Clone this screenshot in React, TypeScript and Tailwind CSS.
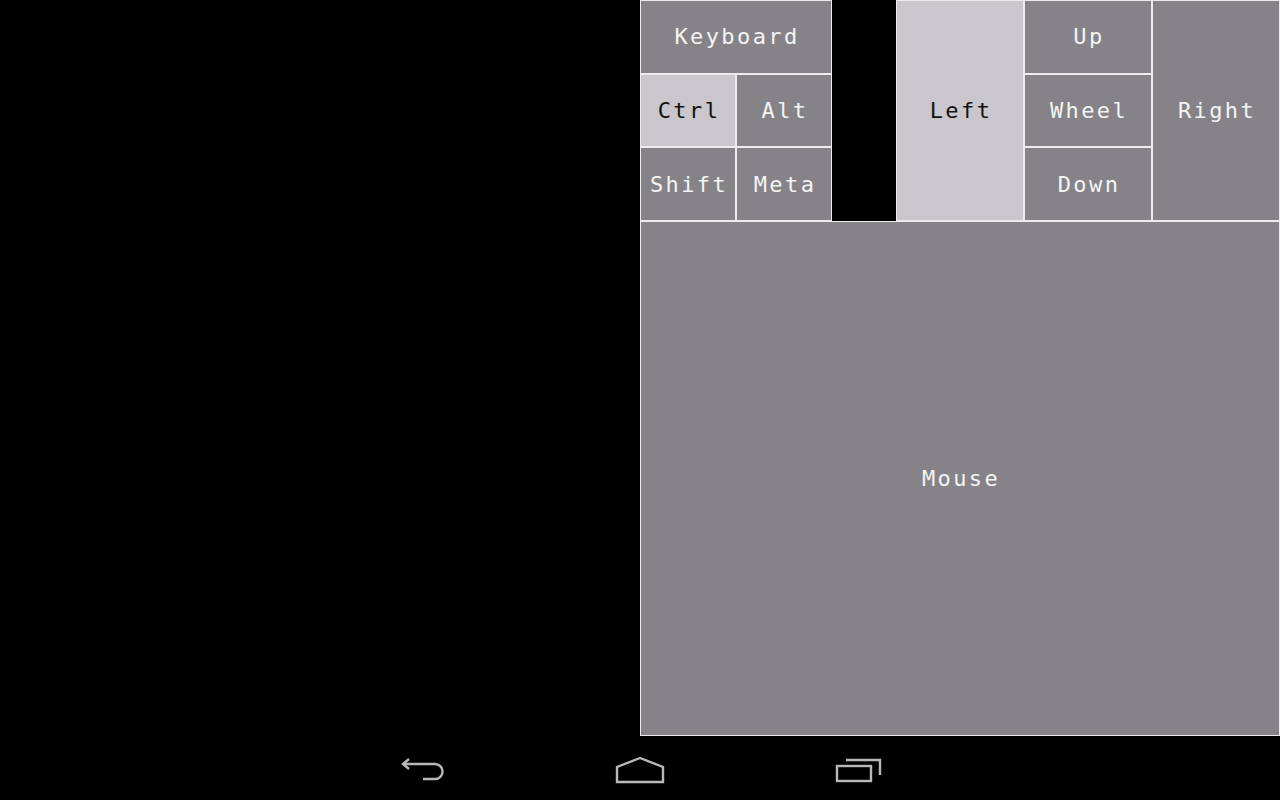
const tile =
  'flex items-center justify-center border border-[#ececec] bg-[#858387] text-[#f4f4f4]'
const lit =
  'flex items-center justify-center border border-[#ececec] bg-[#c9c7cb] text-[#111111]'

function Key({ label, on, className = '' }: { label: string; on?: boolean; className?: string }) {
  return (
    <div className={`${on ? lit : tile} ${className}`}>
      <span className="pl-[2px] tracking-[2.4px]">{label}</span>
    </div>
  )
}

function BackIcon() {
  return (
    <svg width="44" height="26" viewBox="0 0 44 26" fill="none" stroke="#b8b8b8" strokeWidth="2.4">
      <path d="M8 2 L2 7 L8 12" strokeLinejoin="miter" />
      <path d="M2 7 H34 A7.5 7.5 0 0 1 34 22 H22" />
    </svg>
  )
}

function HomeIcon() {
  return (
    <svg width="50" height="28" viewBox="0 0 50 28" fill="none" stroke="#b8b8b8" strokeWidth="2.4">
      <path d="M25 2 L2 11 V26 H48 V11 Z" strokeLinejoin="miter" />
    </svg>
  )
}

function RecentIcon() {
  return (
    <svg width="48" height="28" viewBox="0 0 48 28" fill="none" stroke="#b8b8b8" strokeWidth="2.4">
      <rect x="2" y="10" width="34" height="15" />
      <path d="M11 4 H45 V19" />
    </svg>
  )
}

export default function App() {
  return (
    <div
      className="w-[1280px] h-[800px] bg-black flex flex-col overflow-hidden"
      style={{ fontFamily: '"DejaVu Sans Mono", "Liberation Mono", monospace' }}
    >
      <div className="flex h-[736px]">
        <div className="w-[640px]" />
        <div className="w-[640px] flex flex-col text-[22px]">
          <div className="flex h-[221px]">
            <div className="w-[192px] grid grid-cols-2 grid-rows-3">
              <Key label="Keyboard" className="col-span-2" />
              <Key label="Ctrl" on />
              <Key label="Alt" />
              <Key label="Shift" />
              <Key label="Meta" />
            </div>
            <div className="w-[64px]" />
            <Key label="Left" on className="w-[128px]" />
            <div className="w-[128px] grid grid-rows-3">
              <Key label="Up" />
              <Key label="Wheel" />
              <Key label="Down" />
            </div>
            <Key label="Right" className="w-[128px]" />
          </div>
          <Key label="Mouse" className="flex-1" />
        </div>
      </div>
      <div className="h-[64px] flex items-center justify-center gap-[170px] pt-[4px] pl-[4px]">
        <BackIcon />
        <HomeIcon />
        <RecentIcon />
      </div>
    </div>
  )
}
